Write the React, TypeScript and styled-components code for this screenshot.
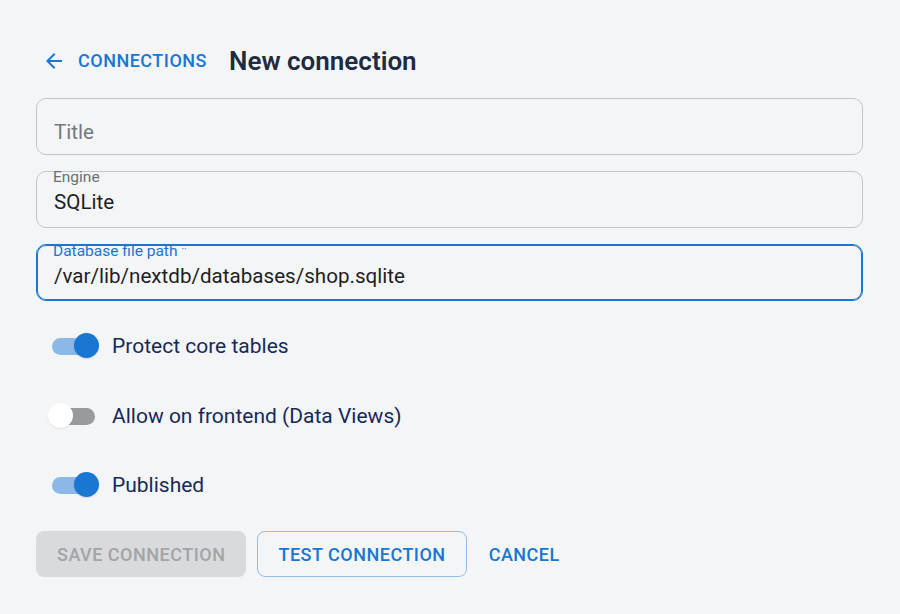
import React, { useState } from "react";
import styled, { createGlobalStyle } from "styled-components";

const GlobalStyle = createGlobalStyle`
  html, body {
    margin: 0;
    padding: 0;
    background: #f4f5f7;
  }
  body {
    font-family: Roboto, "Noto Sans", "Liberation Sans", sans-serif;
    -webkit-font-smoothing: antialiased;
  }
  * {
    box-sizing: border-box;
  }
`;

const Page = styled.div`
  min-height: 614px;
  padding: 36px 37px 0 36px;
  background: #f4f5f7;
`;

const Header = styled.div`
  display: flex;
  align-items: center;
  height: 49px;
  margin-bottom: 13px;
`;

const BackLink = styled.a`
  display: flex;
  align-items: center;
  gap: 12px;
  padding-left: 6px;
  color: #1976d2;
  font-size: 18px;
  font-weight: 500;
  letter-spacing: 0.5px;
  text-transform: uppercase;
  text-decoration: none;
  cursor: pointer;

  svg {
    width: 24px;
    height: 24px;
    fill: currentColor;
  }
`;

const PageTitle = styled.h1`
  margin: 0 0 0 22px;
  font-size: 26px;
  font-weight: 600;
  color: #1e2b40;
`;

const Fields = styled.div`
  display: flex;
  flex-direction: column;
  gap: 16px;
`;

const Field = styled.div<{ $focused?: boolean }>`
  height: 57px;
  padding: 0 17px;
  border: 1px solid ${(p) => (p.$focused ? "#1976d2" : "#c2c4c8")};
  border-radius: 10px;
  box-shadow: ${(p) => (p.$focused ? "inset 0 0 0 1px #1976d2" : "none")};
  display: flex;
  flex-direction: column;
`;

const FieldLabel = styled.label<{ $focused?: boolean }>`
  display: block;
  margin: -3px 0 0 -1px;
  font-size: 15.5px;
  line-height: 16px;
  color: ${(p) => (p.$focused ? "#1976d2" : "#6b6f75")};
  white-space: nowrap;

  small {
    font-size: 10px;
    margin-left: 4px;
    vertical-align: 3px;
  }
`;

const FieldValue = styled.div`
  margin-top: 5px;
  font-size: 20.6px;
  line-height: 24px;
  color: #1d1f23;
`;

const Placeholder = styled.div`
  margin-top: 21px;
  font-size: 20.6px;
  line-height: 24px;
  color: #75787d;
`;

const Toggles = styled.div`
  display: flex;
  flex-direction: column;
  gap: 23.5px;
  margin-top: 22px;
`;

const ToggleRow = styled.label`
  display: flex;
  align-items: center;
  height: 46px;
  cursor: pointer;
`;

const SwitchBox = styled.span`
  position: relative;
  display: block;
  width: 52px;
  height: 26px;
  margin-left: 11px;
`;

const Track = styled.span<{ $on: boolean }>`
  position: absolute;
  left: 5px;
  top: 5px;
  width: 43px;
  height: 17px;
  border-radius: 9px;
  background: ${(p) => (p.$on ? "#8cb8e7" : "#9a9a9b")};
`;

const Thumb = styled.span<{ $on: boolean }>`
  position: absolute;
  top: 0;
  left: ${(p) => (p.$on ? "27px" : "1px")};
  width: 25px;
  height: 25px;
  border-radius: 50%;
  background: ${(p) => (p.$on ? "#1976d2" : "#ffffff")};
  box-shadow: ${(p) => (p.$on ? "0 1px 2px rgba(0,0,0,0.12)" : "0 1px 2px rgba(0,0,0,0.08)")};
`;

const ToggleText = styled.span`
  margin-left: 13px;
  font-size: 21px;
  color: #162a58;
`;

const Actions = styled.div`
  display: flex;
  align-items: center;
  gap: 11px;
  margin-top: 23px;
`;

const Button = styled.button<{ $variant: "contained" | "outlined" | "text" }>`
  height: 46px;
  padding: 0 ${(p) => (p.$variant === "text" ? "10px" : "20px")};
  border-radius: 8px;
  font-family: inherit;
  font-size: 18px;
  font-weight: 500;
  letter-spacing: 0.5px;
  text-transform: uppercase;
  cursor: pointer;
  border: 1px solid
    ${(p) => (p.$variant === "outlined" ? "#92bdea" : "transparent")};
  background: ${(p) => (p.$variant === "contained" ? "#d9dadc" : "transparent")};
  color: ${(p) => (p.$variant === "contained" ? "#a3a4a6" : "#1976d2")};

  &:disabled {
    cursor: default;
  }
`;

function Switch({ on, onToggle }: { on: boolean; onToggle: () => void }) {
  return (
    <SwitchBox onClick={onToggle}>
      <Track $on={on} />
      <Thumb $on={on} />
    </SwitchBox>
  );
}

export default function App() {
  const [flags, setFlags] = useState({
    protect: true,
    frontend: false,
    published: true,
  });

  const toggle = (key: keyof typeof flags) =>
    setFlags((f) => ({ ...f, [key]: !f[key] }));

  return (
    <>
      <GlobalStyle />
      <Page>
        <Header>
          <BackLink>
            <svg viewBox="0 0 24 24">
              <path d="M20 11H7.83l5.59-5.59L12 4l-8 8 8 8 1.41-1.41L7.83 13H20v-2z" />
            </svg>
            Connections
          </BackLink>
          <PageTitle>New connection</PageTitle>
        </Header>

        <Fields>
          <Field>
            <Placeholder>Title</Placeholder>
          </Field>
          <Field>
            <FieldLabel>Engine</FieldLabel>
            <FieldValue>SQLite</FieldValue>
          </Field>
          <Field $focused>
            <FieldLabel $focused>
              Database file path<small>··</small>
            </FieldLabel>
            <FieldValue>/var/lib/nextdb/databases/shop.sqlite</FieldValue>
          </Field>
        </Fields>

        <Toggles>
          <ToggleRow>
            <Switch on={flags.protect} onToggle={() => toggle("protect")} />
            <ToggleText>Protect core tables</ToggleText>
          </ToggleRow>
          <ToggleRow>
            <Switch on={flags.frontend} onToggle={() => toggle("frontend")} />
            <ToggleText>Allow on frontend (Data Views)</ToggleText>
          </ToggleRow>
          <ToggleRow>
            <Switch on={flags.published} onToggle={() => toggle("published")} />
            <ToggleText>Published</ToggleText>
          </ToggleRow>
        </Toggles>

        <Actions>
          <Button $variant="contained" disabled>
            Save connection
          </Button>
          <Button $variant="outlined">Test connection</Button>
          <Button $variant="text">Cancel</Button>
        </Actions>
      </Page>
    </>
  );
}
